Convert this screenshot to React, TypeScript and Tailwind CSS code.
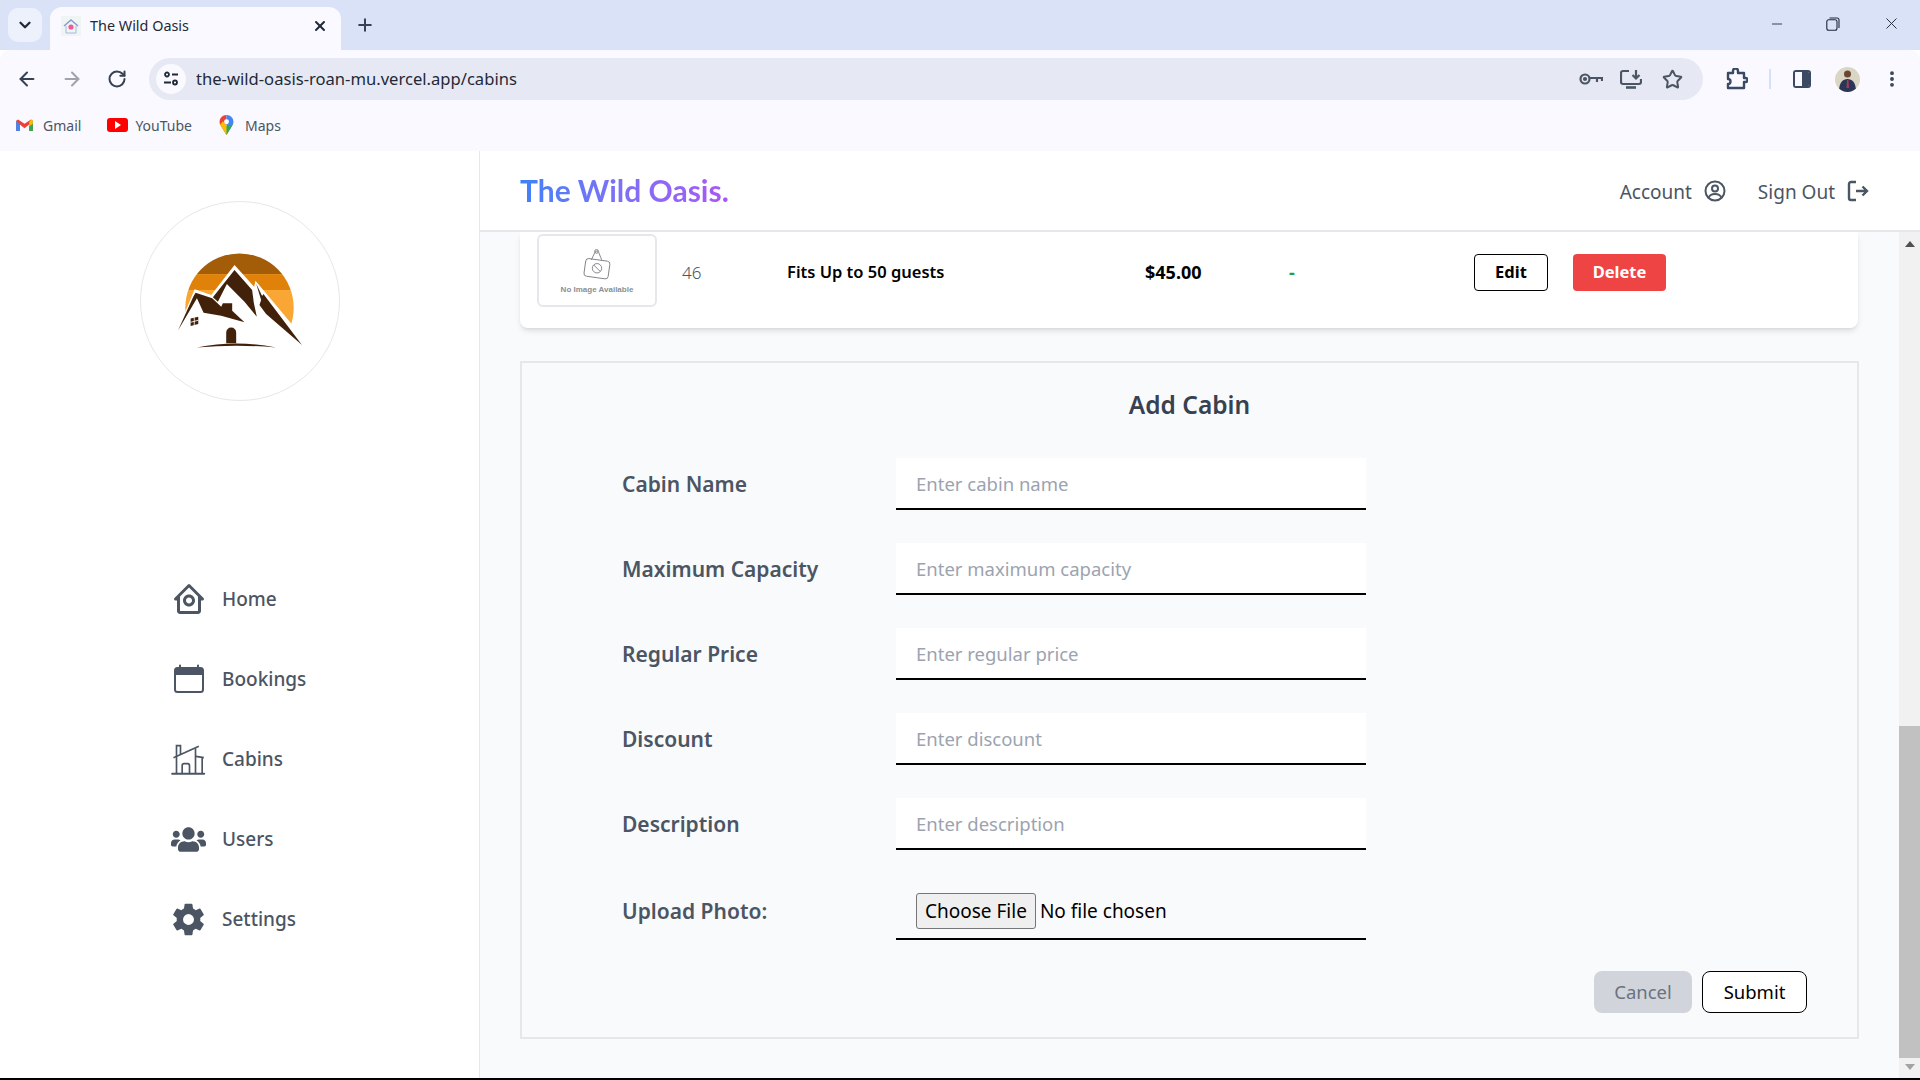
import {
  ArrowLeft,
  ArrowRight,
  ChevronDown,
  EllipsisVertical,
  Minus,
  Plus,
  RotateCw,
  Star,
  X,
} from "lucide-react";
import { BiHomeCircle } from "react-icons/bi";
import { FaUsers } from "react-icons/fa";
import { IoSettingsSharp } from "react-icons/io5";

const FONT = "font-['Noto_Sans',sans-serif]";

const FIELDS = [
  { label: "Cabin Name", placeholder: "Enter cabin name" },
  { label: "Maximum Capacity", placeholder: "Enter maximum capacity" },
  { label: "Regular Price", placeholder: "Enter regular price" },
  { label: "Discount", placeholder: "Enter discount" },
  { label: "Description", placeholder: "Enter description" },
];

function CalendarIcon() {
  return (
    <svg viewBox="0 0 30 30" className="h-[30px] w-[30px]">
      <rect x="1" y="4" width="28" height="24" rx="2.5" fill="none" stroke="#4b5563" strokeWidth="2" />
      <path d="M1 11V6.5A2.5 2.5 0 0 1 3.5 4h23A2.5 2.5 0 0 1 29 6.5V11Z" fill="#4b5563" />
      <path d="M6 1.5v4M24 1.5v4" stroke="#4b5563" strokeWidth="2" strokeLinecap="round" />
    </svg>
  );
}

function CabinIcon() {
  return (
    <svg viewBox="20 15 110 105" className="h-[35px] w-[37px]" fill="none" stroke="#4b5563" strokeWidth="5">
      <path d="M26 110h96" strokeLinecap="round" strokeWidth="6" />
      <path d="M39 110V26h12v28" />
      <path d="M30 62L106 28" />
      <path d="M96 34v76" />
      <path d="M97 58l24 4M116 61v49" />
      <path d="M56 110V86a6 6 0 0 1 6-6h10a6 6 0 0 1 6 6v24" />
    </svg>
  );
}

function LogoMark() {
  return (
    <svg viewBox="160 183 400 300" className="h-[100px] w-[133px]">
      <defs>
        <clipPath id="sun">
          <circle cx="360" cy="353" r="163" />
        </clipPath>
      </defs>
      <g clipPath="url(#sun)">
        <rect x="160" y="183" width="400" height="69" fill="#a35c07" />
        <rect x="160" y="252" width="400" height="48" fill="#e08209" />
        <rect x="160" y="300" width="400" height="220" fill="#f9a635" />
      </g>
      <path d="M170 430L225 298L275 315L345 225L404 290L408 272L436 305L525 412L560 483H160Z" fill="#fff" />
      <path d="M175 422L222 318L228 308L278 325L305 350L310 340H338V362L375 397L305 377L252 368L232 325Z" fill="#42210a" />
      <path d="M345 240L398 300L403 338L412 380L375 335L322 282L295 335L280 322Z" fill="#42210a" />
      <path d="M410 280L428 318L432 312L548 465L440 372L420 345L425 330Z" fill="#42210a" />
      <path d="M213 386L236 380V402L213 408Z" fill="#42210a" />
      <path d="M213 397L236 391M224 382V405" stroke="#fff" strokeWidth="2.5" />
      <path d="M320 460V428a15 15 0 0 1 30 0V460Z" fill="#42210a" />
      <path d="M232 473Q350 448 470 473Q350 462 232 473Z" fill="#42210a" />
    </svg>
  );
}

function NoImage() {
  return (
    <div className="flex h-full w-full flex-col items-center justify-center">
      <svg viewBox="0 0 32 34" className="h-[33px] w-[30px]" fill="none" stroke="#7d8488" strokeWidth="1">
        <path d="M10 12L14 3.5a2.2 2.2 0 0 1 3.8.5L21 12" />
        <circle cx="15.5" cy="3" r="2" />
        <rect x="3" y="12" width="26" height="19" rx="3" transform="rotate(8 16 21)" />
        <circle cx="16" cy="21" r="5" />
        <path d="M12.5 17.5L19.5 24.5" />
      </svg>
      <span className="mt-[4px] font-['Liberation_Sans',sans-serif] text-[8px] leading-[9px] font-bold text-[#8a9094]">
        No Image Available
      </span>
    </div>
  );
}

function NavRow({ icon, label }: { icon: React.ReactNode; label: string }) {
  return (
    <a className="flex h-[80px] items-center text-[19px] font-medium text-[#4b5563]">
      <span className="flex w-[52px] shrink-0 items-center justify-center pr-[15px]">{icon}</span>
      {label}
    </a>
  );
}

function ChromeBar() {
  return (
    <div className={`${FONT} text-[#1f2937]`}>
      <div className="flex h-[50px] items-end bg-[#dae2f8] pl-[8px]">
        <div className="mb-[8px] flex h-[34px] w-[34px] items-center justify-center rounded-[10px] bg-[#edf1fc]">
          <ChevronDown size={18} strokeWidth={3} />
        </div>
        <div className="ml-[8px] flex h-[43px] w-[291px] items-center rounded-t-[12px] bg-[#f9f9ff] pr-[13px] pb-[6px] pl-[11px]">
          <svg viewBox="0 0 20 20" className="h-[20px] w-[20px]">
            <rect width="20" height="20" fill="#eef5f3" />
            <path d="M3 10l7-6 7 6" fill="none" stroke="#8a9ad8" strokeWidth="1.5" />
            <path d="M5 10v7h10v-7" fill="none" stroke="#a9b6e4" strokeWidth="1" />
            <circle cx="10" cy="11" r="2.6" fill="#ee5b9a" />
          </svg>
          <span className="ml-[9px] flex-1 text-[14.4px]">The Wild Oasis</span>
          <X size={16} strokeWidth={3} />
        </div>
        <div className="mb-[8px] ml-[7px] flex h-[34px] w-[34px] items-center justify-center text-[#374151]">
          <Plus size={20} strokeWidth={2.4} />
        </div>
        <div className="flex-1" />
        <div className="mb-[17px] flex items-center text-[#1f2937]">
          <Minus size={16} strokeWidth={1.3} />
          <svg viewBox="0 0 14 14" className="ml-[41px] h-[14px] w-[14px]" fill="none" stroke="#1f2937" strokeWidth="1.1">
            <rect x="0.8" y="2.8" width="10.2" height="10.4" rx="2" />
            <path d="M3.5 1h7.5a2 2 0 0 1 2 2v8" />
          </svg>
          <X size={19} strokeWidth={1.2} className="mr-[19px] ml-[42px]" />
        </div>
      </div>

      <div className="h-[101px] rounded-t-[10px] bg-[#f9f9ff]">
        <div className="flex h-[58px] items-center pr-[18px] pl-[16px]">
          <ArrowLeft size={22} strokeWidth={2.2} className="text-[#374151]" />
          <ArrowRight size={22} strokeWidth={2.2} className="ml-[23px] text-[#a0a3ab]" />
          <RotateCw size={20} strokeWidth={2.4} className="ml-[24px] text-[#374151]" />
          <div className="ml-[22px] flex h-[42px] flex-1 items-center rounded-full bg-[#e6e9f3] pr-[20px] pl-[7px]">
            <div className="flex h-[30px] w-[30px] items-center justify-center rounded-full bg-[#f9f9ff]">
              <svg viewBox="0 0 16 16" className="h-[16px] w-[16px]" fill="none" stroke="#1f2937" strokeWidth="1.8">
                <circle cx="4" cy="3.5" r="2" />
                <path d="M9 3.5h6M1 11.5h7" />
                <circle cx="12" cy="11.5" r="2" />
              </svg>
            </div>
            <span className="ml-[10px] flex-1 pt-[1px] text-[16.6px] text-[#1f2937]">the-wild-oasis-roan-mu.vercel.app/cabins</span>
            <svg viewBox="0 0 24 14" className="h-[14px] w-[24px]" fill="none" stroke="#4b5563" strokeWidth="2.2">
              <circle cx="6" cy="7" r="4.5" />
              <path d="M10.5 6h12.5v3M18 6v4" />
              <circle cx="6" cy="7" r="1" fill="#4b5563" />
            </svg>
            <svg viewBox="0 0 22 20" className="ml-[17px] h-[20px] w-[22px]" fill="none" stroke="#4b5563" strokeWidth="2.2">
              <path d="M9 2H3a2 2 0 0 0-2 2v9a2 2 0 0 0 2 2h16a2 2 0 0 0 2-2v-3" />
              <path d="M6 18.5h10" strokeWidth="2.6" />
              <path d="M16 1v8M12.5 6l3.5 3.5L19.500 6" />
            </svg>
            <Star size={21} strokeWidth={2.3} className="ml-[20px] text-[#4b5563]" />
          </div>
          <svg viewBox="0 0 22 22" className="ml-[23px] h-[22px] w-[22px]" fill="none" stroke="#3b4a63" strokeWidth="2.4">
            <path d="M2 5h5V3a2.500 2.500 0 0 1 5 0v2h6v5h1.500a2 2 0 0 1 0 4H18v6H2v-4a2.500 2.500 0 0 0 0-5V5Z" strokeLinejoin="round" />
          </svg>
          <div className="ml-[21px] h-[20px] w-[2px] bg-[#d6e0f7]" />
          <div className="ml-[22px] flex h-[18px] w-[18px] overflow-hidden rounded-[3px] border-2 border-[#3b4a63]">
            <div className="flex-1 bg-[#f9f9ff]" />
            <div className="w-[7px] bg-[#3b4a63]" />
          </div>
          <div className="ml-[24px] h-[25px] w-[25px] overflow-hidden rounded-full bg-[#d9d6c5]">
            <svg viewBox="0 0 25 25" className="h-full w-full">
              <circle cx="12.500" cy="7" r="3.500" fill="#6b4630" />
              <path d="M4 25c0-10 4-13 8.500-13S21 15 21 25Z" fill="#2a3658" />
              <path d="M12 13h1.500l.5 8h-2.500Z" fill="#a83a4a" />
            </svg>
          </div>
          <EllipsisVertical size={20} strokeWidth={2.6} className="ml-[22px] text-[#374151]" />
        </div>

        <div className="flex h-[34px] items-center pl-[16px] text-[14px] text-[#4b5563]">
          <svg viewBox="0 0 18 14" className="h-[13px] w-[17px]">
            <path d="M0 2v11h4V6l5 4 5-4v7h4V2l-2-1.500L9 5 2 .5Z" fill="#ea4335" />
            <path d="M0 2v11h4V5.500Z" fill="#4285f4" />
            <path d="M14 5.500V13h4V2Z" fill="#34a853" />
            <path d="M16 .5L18 2v3l-4 3V3.500Z" fill="#fbbc04" />
          </svg>
          <span className="ml-[10px]">Gmail</span>
          <div className="ml-[26px] flex h-[14px] w-[21px] items-center justify-center rounded-[3px] bg-[#ff0000]">
            <div className="h-0 w-0 border-y-[4px] border-l-[6px] border-y-transparent border-l-white" />
          </div>
          <span className="ml-[7px]">YouTube</span>
          <svg viewBox="0 0 16 22" className="ml-[27px] h-[20px] w-[15px]">
            <path d="M8 0a7.500 7.500 0 0 0-7 10.500L8 22Z" fill="#ea4335" />
            <path d="M8 0a7.500 7.500 0 0 1 7 10.500L8 22Z" fill="#4285f4" />
            <path d="M1 10.500L8 22l3.500-7.500L4 7Z" fill="#fbbc04" />
            <path d="M15 10.500L8 22V12Z" fill="#34a853" />
            <circle cx="8" cy="7.500" r="2.700" fill="#fff" />
          </svg>
          <span className="ml-[11px]">Maps</span>
        </div>
      </div>
    </div>
  );
}

function Sidebar() {
  return (
    <aside className="flex w-[480px] shrink-0 flex-col items-center border-r border-[#e5e7eb] bg-white pt-[50px]">
      <div className="flex h-[200px] w-[200px] items-center justify-center rounded-full border border-[#e5e7eb]">
        <LogoMark />
      </div>
      <nav className="mt-[158px] w-[400px] self-start pl-[170px] whitespace-nowrap">
        <NavRow icon={<BiHomeCircle size={36} color="#4b5563" />} label="Home" />
        <NavRow icon={<CalendarIcon />} label="Bookings" />
        <NavRow icon={<CabinIcon />} label="Cabins" />
        <NavRow icon={<FaUsers size={35} color="#4b5563" />} label="Users" />
        <NavRow icon={<IoSettingsSharp size={35} color="#4b5563" />} label="Settings" />
      </nav>
    </aside>
  );
}

function Header() {
  return (
    <header className="flex h-[81px] shrink-0 items-center justify-between border-b-2 border-[#e5e7eb] bg-white pr-[51px] pl-[40px]">
      <h1 className="bg-gradient-to-r from-[#3b82f6] to-[#a855f7] bg-clip-text pb-[1px] font-['Lato',sans-serif] text-[30px] font-bold text-transparent">
        The Wild Oasis.
      </h1>
      <div className="flex items-center text-[19px] text-[#4b5563]">
        <span className="pt-[3px]">Account</span>
        <svg viewBox="0 0 22 22" className="ml-[12px] h-[22px] w-[22px]" fill="none" stroke="#4b5563" strokeWidth="2">
          <circle cx="11" cy="11" r="9.500" />
          <circle cx="11" cy="8.500" r="3" />
          <path d="M4.500 18c1-3 4-4 6.500-4s5.500 1 6.500 4" />
        </svg>
        <span className="ml-[32px] pt-[3px]">Sign Out</span>
        <svg viewBox="0 0 22 22" className="ml-[12px] h-[22px] w-[22px]" fill="none" stroke="#4b5563" strokeWidth="2.4">
          <path d="M9 2H4a2 2 0 0 0-2 2v14a2 2 0 0 0 2 2h5" />
          <path d="M9 11H20M15.500 6.500L20 11l-4.500 4.500" />
        </svg>
      </div>
    </header>
  );
}

function CabinRow() {
  return (
    <div className="flex h-[96px] items-start rounded-b-lg bg-white pt-[2px] pl-[17px] shadow-md">
      <div className="h-[73px] w-[120px] shrink-0 rounded-[6px] border-2 border-[#e5e7eb]">
        <NoImage />
      </div>
      <div className="flex h-[73px] flex-1 items-center pt-[4px] text-[18px] text-black">
        <span className="ml-[25px] w-[105px] text-[17px] font-light text-[#4b5563]">46</span>
        <span className="w-[358px] text-[16.5px] font-semibold">Fits Up to 50 guests</span>
        <span className="w-[144px] font-bold">$45.00</span>
        <span className="w-[185px] font-bold text-[#16a34a]">-</span>
        <button className="h-[37px] w-[74px] rounded-[4px] border border-black bg-white text-[16.5px] font-bold">Edit</button>
        <button className="ml-[25px] h-[37px] w-[93px] rounded-[4px] bg-[#ef4444] text-[16.5px] font-bold text-white">Delete</button>
      </div>
    </div>
  );
}

function AddCabinForm() {
  return (
    <form className="mt-[33px] -mr-[1px] flex h-[678px] flex-col border-2 border-[#e5e7eb] bg-[#f9fafb] pt-[22px] pr-[50px] pl-[100px]">
      <h2 className="-ml-[50px] text-center text-[24.5px] leading-[40px] font-semibold text-[#374151]">Add Cabin</h2>
      <div className="mt-[33px] flex flex-col gap-[33px]">
        {FIELDS.map((field) => (
          <div key={field.label} className="flex items-center">
            <label className="w-[274px] pt-[2px] text-[21px] font-semibold text-[#4b5563]">{field.label}</label>
            <input
              placeholder={field.placeholder}
              className="h-[52px] w-[470px] border-b-2 border-black bg-white px-[20px] text-[18.5px] outline-none placeholder:text-[#9ca3af]"
            />
          </div>
        ))}
        <div className="flex items-center">
          <label className="w-[274px] pt-[1px] text-[21px] font-semibold text-[#4b5563]">Upload Photo:</label>
          <input
            type="file"
            className="h-[57px] w-[470px] border-b-2 border-black px-[20px] py-[10px] text-[19px] text-black file:mr-[4px] file:h-[36px] file:rounded-[3px] file:border file:border-[#767676] file:bg-[#efefef] file:px-[8px]"
          />
        </div>
      </div>
      <div className="mt-[31px] flex justify-end gap-[10px]">
        <button type="button" className="h-[42px] w-[98px] rounded-lg bg-[#d1d5db] text-[18.5px] text-[#6b7280]">Cancel</button>
        <button type="submit" className="h-[42px] w-[105px] rounded-lg border border-black bg-white text-[18.5px] text-black">Submit</button>
      </div>
    </form>
  );
}

function Scrollbar() {
  return (
    <div className="flex w-[21px] shrink-0 flex-col items-center bg-[#f1f1f1]">
      <div className="mt-[9px] h-0 w-0 border-x-[5px] border-b-[6px] border-x-transparent border-b-[#505050]" />
      <div className="mt-[479px] h-[332px] w-full bg-[#c1c1c1]" />
      <div className="mt-[6px] h-0 w-0 border-x-[5px] border-t-[6px] border-x-transparent border-t-[#a3a3a3]" />
    </div>
  );
}

export default function App() {
  return (
    <div className={`${FONT} flex h-[1080px] w-[1920px] flex-col overflow-hidden bg-white`}>
      <ChromeBar />
      <div className="flex min-h-0 flex-1">
        <Sidebar />
        <div className="flex min-w-0 flex-1 flex-col">
          <Header />
          <div className="flex min-h-0 flex-1">
            <main className="flex-1 overflow-hidden bg-[#f9fafb] pr-[41px] pl-[40px]">
              <CabinRow />
              <AddCabinForm />
            </main>
            <Scrollbar />
          </div>
        </div>
      </div>
      <div className="h-[2px] shrink-0 bg-black" />
    </div>
  );
}
